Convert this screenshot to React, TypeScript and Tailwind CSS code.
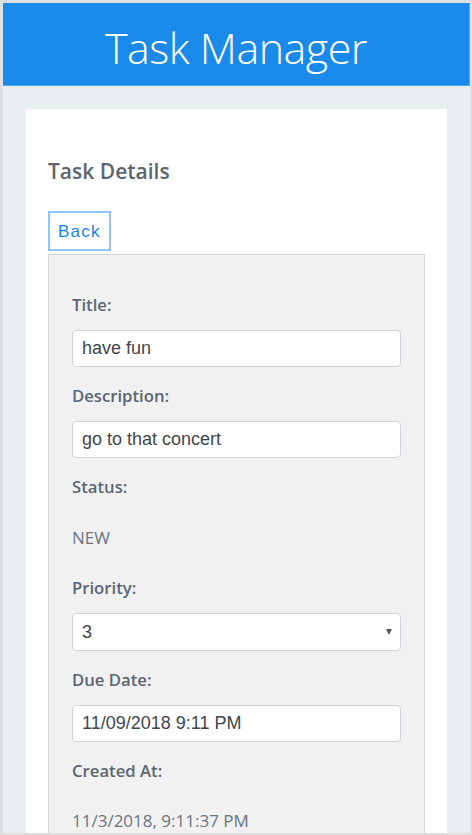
const labelCls =
  "block text-[16.7px] leading-6 font-semibold text-[#5b6672] mb-[13px]";
const inputCls =
  "block w-full h-[37px] rounded-[4px] border border-[#cfd3d7] bg-white px-[9px] text-[18px] text-[#41464c] outline-none";
const arial = { fontFamily: '"Liberation Sans", Arial, sans-serif' };

function Field({ label, children }: { label: string; children: React.ReactNode }) {
  return (
    <div className="mb-[17px]">
      <label className={labelCls}>{label}</label>
      {children}
    </div>
  );
}

export default function App() {
  return (
    <div
      className="h-[835px] overflow-hidden border-2 border-t-[3px] border-l-[3px] border-[#dedfe0] bg-[#e9eef1]"
      style={{ fontFamily: '"Open Sans", "Noto Sans", sans-serif' }}
    >
      <header className="h-[83px] bg-[#1a8aea] border-r border-b border-[#56a8ef] flex justify-center">
        <h1 className="text-[43px] font-light text-white leading-none pt-[23px] tracking-[-0.5px]">
          Task Manager
        </h1>
      </header>

      <div className="px-[23px] pt-[23px] h-full">
        <div className="bg-white h-full px-[22px] pt-[49px]">
          <h2 className="text-[21px] font-semibold text-[#5b6672] leading-tight mb-[27px]">
            Task Details
          </h2>

          <button
            className="h-[40px] px-[8px] border-2 border-[#8fc5f6] bg-white text-[#1b86e6] text-[17px] tracking-[1.2px]"
            style={arial}
          >
            Back
          </button>

          <div className="mt-[3px] bg-[#f1f1f1] border border-[#d6d6d6] px-[23px] pt-[38px] pb-10">
            <Field label="Title:">
              <input className={inputCls} style={arial} defaultValue="have fun" />
            </Field>
            <Field label="Description:">
              <input className={inputCls} style={arial} defaultValue="go to that concert" />
            </Field>
            <div className="mb-[26px]">
              <div className="text-[16.7px] leading-6 font-semibold text-[#5b6672]">
                Status:
              </div>
              <p className="mt-[27px] text-[17px] leading-6 text-[#6b7580]">NEW</p>
            </div>
            <Field label="Priority:">
              <div className="relative">
                <select
                  className={inputCls + " h-[38px] appearance-none"}
                  style={arial}
                  defaultValue="3"
                >
                  <option value="1">1</option>
                  <option value="2">2</option>
                  <option value="3">3</option>
                  <option value="4">4</option>
                  <option value="5">5</option>
                </select>
                <span className="pointer-events-none absolute right-[9px] top-[16px] w-0 h-0 border-l-[3.5px] border-r-[3.5px] border-t-[6px] border-l-transparent border-r-transparent border-t-[#555]" />
              </div>
            </Field>
            <Field label="Due Date:">
              <input className={inputCls} style={arial} defaultValue="11/09/2018 9:11 PM" />
            </Field>
            <div>
              <div className="text-[16.7px] leading-6 font-semibold text-[#5b6672]">
                Created At:
              </div>
              <p className="mt-[26px] text-[17px] leading-6 text-[#6b7580]">
                11/3/2018, 9:11:37 PM
              </p>
            </div>
          </div>
        </div>
      </div>
    </div>
  );
}
